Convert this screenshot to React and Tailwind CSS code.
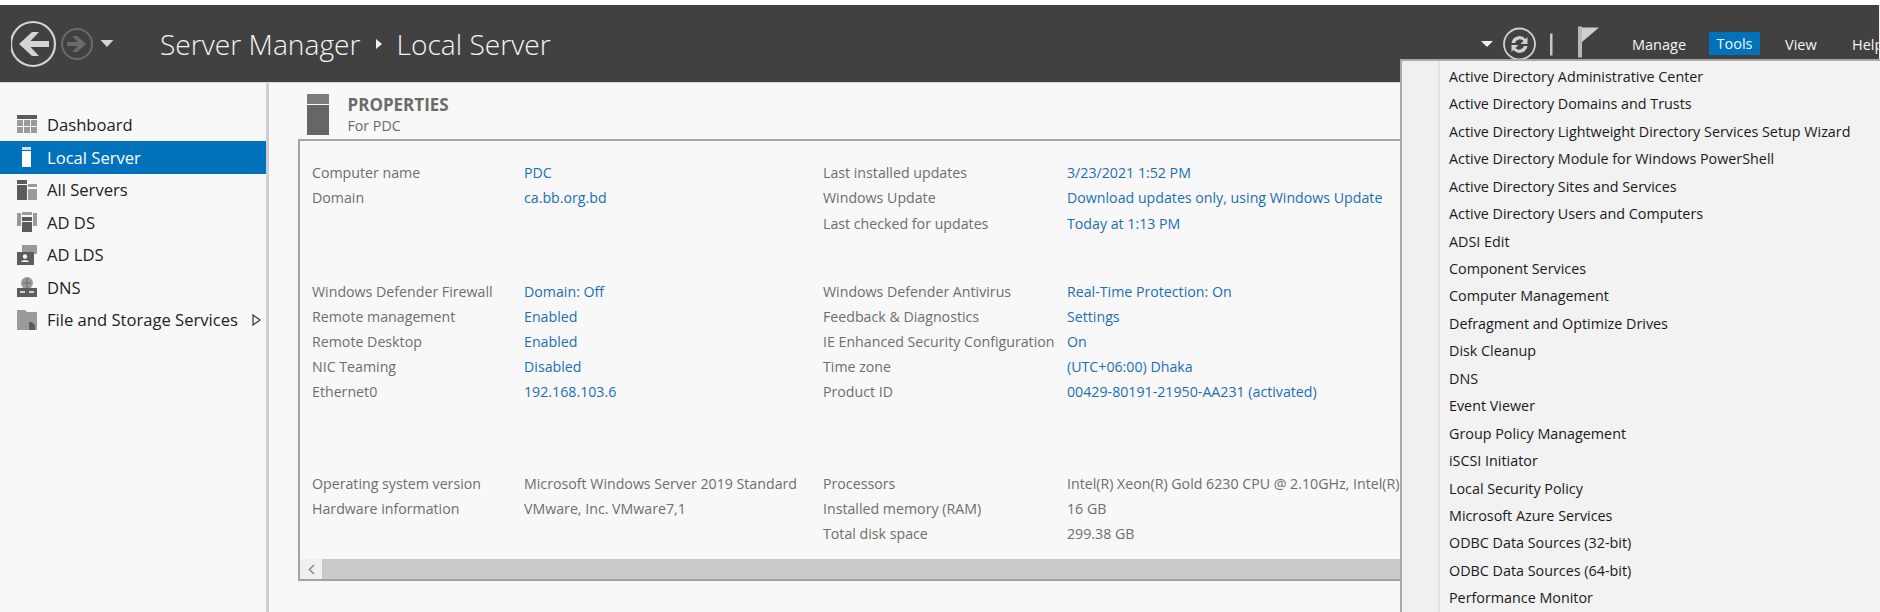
import React from 'react';

const font = "font-['Open_Sans',sans-serif]";

const navItems = ['Dashboard', 'Local Server', 'All Servers', 'AD DS', 'AD LDS', 'DNS', 'File and Storage Services'];

const toolItems = [
  'Active Directory Administrative Center',
  'Active Directory Domains and Trusts',
  'Active Directory Lightweight Directory Services Setup Wizard',
  'Active Directory Module for Windows PowerShell',
  'Active Directory Sites and Services',
  'Active Directory Users and Computers',
  'ADSI Edit',
  'Component Services',
  'Computer Management',
  'Defragment and Optimize Drives',
  'Disk Cleanup',
  'DNS',
  'Event Viewer',
  'Group Policy Management',
  'iSCSI Initiator',
  'Local Security Policy',
  'Microsoft Azure Services',
  'ODBC Data Sources (32-bit)',
  'ODBC Data Sources (64-bit)',
  'Performance Monitor',
];

const groups = [
  {
    className: 'mt-[19.5px]',
    rows: [
      ['Computer name', 'PDC', true, 'Last installed updates', '3/23/2021 1:52 PM', true],
      ['Domain', 'ca.bb.org.bd', true, 'Windows Update', 'Download updates only, using Windows Update', true],
      ['', '', false, 'Last checked for updates', 'Today at 1:13 PM', true],
    ],
  },
  {
    className: 'mt-[43px]',
    rows: [
      ['Windows Defender Firewall', 'Domain: Off', true, 'Windows Defender Antivirus', 'Real-Time Protection: On', true],
      ['Remote management', 'Enabled', true, 'Feedback & Diagnostics', 'Settings', true],
      ['Remote Desktop', 'Enabled', true, 'IE Enhanced Security Configuration', 'On', true],
      ['NIC Teaming', 'Disabled', true, 'Time zone', '(UTC+06:00) Dhaka', true],
      ['Ethernet0', '192.168.103.6', true, 'Product ID', '00429-80191-21950-AA231 (activated)', true],
    ],
  },
  {
    className: 'mt-[67px]',
    rows: [
      ['Operating system version', 'Microsoft Windows Server 2019 Standard', false, 'Processors', 'Intel(R) Xeon(R) Gold 6230 CPU @ 2.10GHz, Intel(R) Xeon(R) Gold 6230 CPU @ 2.10GHz', false],
      ['Hardware information', 'VMware, Inc. VMware7,1', false, 'Installed memory (RAM)', '16 GB', false],
      ['', '', false, 'Total disk space', '299.38 GB', false],
    ],
  },
];

const NavIcon = ({ index, active }) => {
  const c = active ? '#ffffff' : '#5c5c5c';
  const l = active ? '#ffffff' : '#9a9a9a';
  const icons = [
    <g key="d">
      <rect x="0" y="0" width="20" height="4" fill={c} />
      <path d="M0 5h6v6H0zM7 5h6v6H7zM14 5h6v6h-6zM0 12h6v6H0zM7 12h6v6H7zM14 12h6v6h-6z" fill={l} />
    </g>,
    <g key="l">
      <rect x="5" y="0" width="9" height="3" fill={c} opacity="0.8" />
      <rect x="5" y="4" width="9" height="16" fill={c} />
    </g>,
    <g key="a">
      <rect x="0" y="0" width="10" height="4" fill={c} />
      <rect x="0" y="5" width="10" height="15" fill={c} />
      <rect x="11" y="4" width="9" height="3" fill={l} />
      <rect x="11" y="9" width="9" height="11" fill={l} />
    </g>,
    <g key="ds">
      <path d="M0 1h4v13H0zM16 1h4v13h-4z" fill={l} />
      <rect x="5" y="0" width="10" height="3" fill={l} />
      <rect x="5" y="5" width="10" height="4" fill={c} />
      <rect x="5" y="10" width="10" height="10" fill={c} />
    </g>,
    <g key="lds">
      <rect x="5" y="0" width="15" height="9" fill={l} />
      <rect x="0" y="7" width="17" height="13" fill={c} />
      <circle cx="8" cy="11.5" r="2.2" fill="#f8f8f8" />
      <path d="M4 17c0-2.5 8-2.5 8 0z" fill="#f8f8f8" />
    </g>,
    <g key="dns">
      <circle cx="10" cy="6" r="6" fill={l} />
      <path d="M6 6h8M10 1v10" stroke="#666666" strokeWidth="1" />
      <rect x="0" y="11" width="20" height="9" fill={c} />
      <path d="M3 15h5M12 15h5" stroke="#f8f8f8" strokeWidth="1.5" />
    </g>,
    <g key="f">
      <path d="M0 0h8l2 2h10v4H0z" fill={l} />
      <rect x="0" y="6" width="20" height="14" fill={l} />
      <path d="M12 12h3l3 3v5h-6z" fill={c} />
    </g>,
  ];
  return (
    <svg width="20" height="20" viewBox="0 0 20 20" className="shrink-0">
      {icons[index]}
    </svg>
  );
};

const Header = () => (
  <div className="flex h-[77px] mt-[5px] bg-[#414141] items-center border-r border-[#f0f0f0] overflow-hidden shrink-0">
    <svg width="118" height="50" viewBox="0 0 118 50" className="ml-[11px] shrink-0">
      <circle cx="22" cy="25" r="22" fill="none" stroke="#d4d4d4" strokeWidth="2.2" />
      <path d="M8 25 L21 13 H28 L19.500 22 H38 V28 H19.500 L28 37 H21 Z" fill="#d4d4d4" />
      <circle cx="66" cy="25" r="15" fill="none" stroke="#6b6b6b" strokeWidth="2" />
      <path d="M75 25 L66 17 H61 L67 23 H56 V27 H67 L61 33 H66 Z" fill="#6b6b6b" />
      <path d="M89.500 21 H102.500 L96 28 Z" fill="#d4d4d4" />
    </svg>
    <div className={`${font} ml-[31px] mt-[1px] flex items-center text-[28.2px] font-light text-[#f4f4f4] whitespace-nowrap`}>
      <span>Server Manager</span>
      <svg width="8" height="10" viewBox="0 0 8 10" className="ml-[14px] mr-[14px]">
        <path d="M1 0 L7 5 L1 10 Z" fill="#f0f0f0" />
      </svg>
      <span>Local Server</span>
    </div>
    <div className="flex-1" />
    <svg width="125" height="50" viewBox="0 0 125 50" className="shrink-0 mr-[27px]">
      <path d="M1 22 H13 L7 28 Z" fill="#f0f0f0" />
      <circle cx="39.500" cy="25" r="15.500" fill="none" stroke="#d0d0d0" strokeWidth="1.800" />
      <path d="M31.500 24 A8 8 0 0 1 45.500 20 L47.500 18 V25 H40.500 L43.500 22 A5 5 0 0 0 35 24 Z" fill="#d0d0d0" />
      <path d="M47.500 27 A8 8 0 0 1 33.500 31 L31.500 33 V26 H38.500 L35.500 29 A5 5 0 0 0 44 27 Z" fill="#d0d0d0" />
      <rect x="70" y="14.500" width="2.500" height="22" fill="#c8c8c8" />
      <rect x="98" y="7.500" width="4" height="31" fill="#b8b8b8" />
      <path d="M102 8.500 H119 L102 23 Z" fill="#d0d0d0" />
    </svg>
    <div className={`${font} flex items-center text-[14.5px] text-[#f5f5f5] w-[247px] shrink-0`}>
      <span className="w-[77px] pt-[2px] shrink-0">Manage</span>
      <span className="w-[51px] h-[23px] pt-[1px] shrink-0 bg-[#0072bc] flex items-center justify-center">Tools</span>
      <span className="ml-[25px] w-[67px] pt-[2px] shrink-0">View</span>
      <span className="pt-[2px] shrink-0">Help</span>
    </div>
  </div>
);

const Sidebar = () => (
  <div className={`${font} w-[269px] shrink-0 border-r-[3px] border-[#cfcfcf] pt-[25.5px] text-[16.600px] text-[#222222]`}>
    {navItems.map((item, i) => (
      <div
        key={item}
        className={`flex items-center h-[32.500px] pl-[17px] ${i === 1 ? 'bg-[#0072bc] text-white' : ''}`}
      >
        <NavIcon index={i} active={i === 1} />
        <span className="ml-[10px] pt-[2px] whitespace-nowrap">{item}</span>
        {i === 6 && (
          <svg width="9" height="12" viewBox="0 0 9 12" className="ml-[14px]">
            <path d="M1 1 L8 6 L1 11 Z" fill="#f8f8f8" stroke="#333333" strokeWidth="1.200" />
          </svg>
        )}
      </div>
    ))}
  </div>
);

const Properties = () => (
  <div className={`${font} flex-1 min-w-0 pl-[29px] pt-[11px] text-[14.200px]`}>
    <div className="flex h-[45px]">
      <svg width="22" height="41" viewBox="0 0 22 41" className="ml-[9px] shrink-0">
        <rect x="0" y="0" width="22" height="10" fill="#7c7c7c" />
        <rect x="0" y="11" width="22" height="30" fill="#666666" />
      </svg>
      <div className="ml-[18.500px] pt-[1px]">
        <div className="text-[17px] font-bold leading-[20px] text-[#6b6b6b]">PROPERTIES</div>
        <div className="text-[14.200px] leading-[22px] text-[#6b6b6b]">For PDC</div>
      </div>
    </div>
    <div className="w-[1104px] h-[442px] border-2 border-[#a3a3a3] flex flex-col overflow-hidden">
      <div className="flex-1 pl-[12px]">
        {groups.map((group, g) => (
          <div key={g} className={group.className}>
            {group.rows.map((row, r) => (
              <div key={r} className="flex h-[25.100px] items-center whitespace-nowrap text-[#6e6e6e]">
                <div className="w-[212px] shrink-0">{row[0]}</div>
                <div className={`w-[299px] shrink-0 ${row[2] ? 'text-[#1a6fb5]' : ''}`}>{row[1]}</div>
                <div className="w-[244px] shrink-0">{row[3]}</div>
                <div className={row[5] ? 'text-[#1a6fb5]' : ''}>{row[4]}</div>
              </div>
            ))}
          </div>
        ))}
      </div>
      <div className="h-[20px] bg-[#cacaca] shrink-0">
        <div className="w-[22px] h-full bg-[#f0f0f0] flex items-center justify-center">
          <svg width="7" height="11" viewBox="0 0 7 11">
            <path d="M6 1 L1.500 5.500 L6 10" fill="none" stroke="#8a8a8a" strokeWidth="1.500" />
          </svg>
        </div>
      </div>
    </div>
  </div>
);

const ToolsMenu = () => (
  <div className={`${font} absolute left-[1400px] top-[59px] w-[480px] h-[553px] bg-[#f2f2f2] border-l-2 border-t-2 border-[#a8a8a8] flex text-[14.330px] text-[#1a1a1a]`}>
    <div className="w-[38px] shrink-0 bg-[#f0f0f0] border-r-2 border-[#e3e3e3]" />
    <div className="pl-[9px] pt-[2px] whitespace-nowrap">
      {toolItems.map((item) => (
        <div key={item} className="h-[27.450px] flex items-center">{item}</div>
      ))}
    </div>
  </div>
);

export default function App() {
  return (
    <div className="relative w-[1880px] h-[612px] bg-[#f8f8f8] overflow-hidden flex flex-col">
      <div className="absolute inset-x-0 top-0 h-[5px] bg-white" />
      <Header />
      <div className="flex flex-1 min-h-0 border-t border-[#d8d8d8]">
        <Sidebar />
        <Properties />
      </div>
      <ToolsMenu />
    </div>
  );
}
